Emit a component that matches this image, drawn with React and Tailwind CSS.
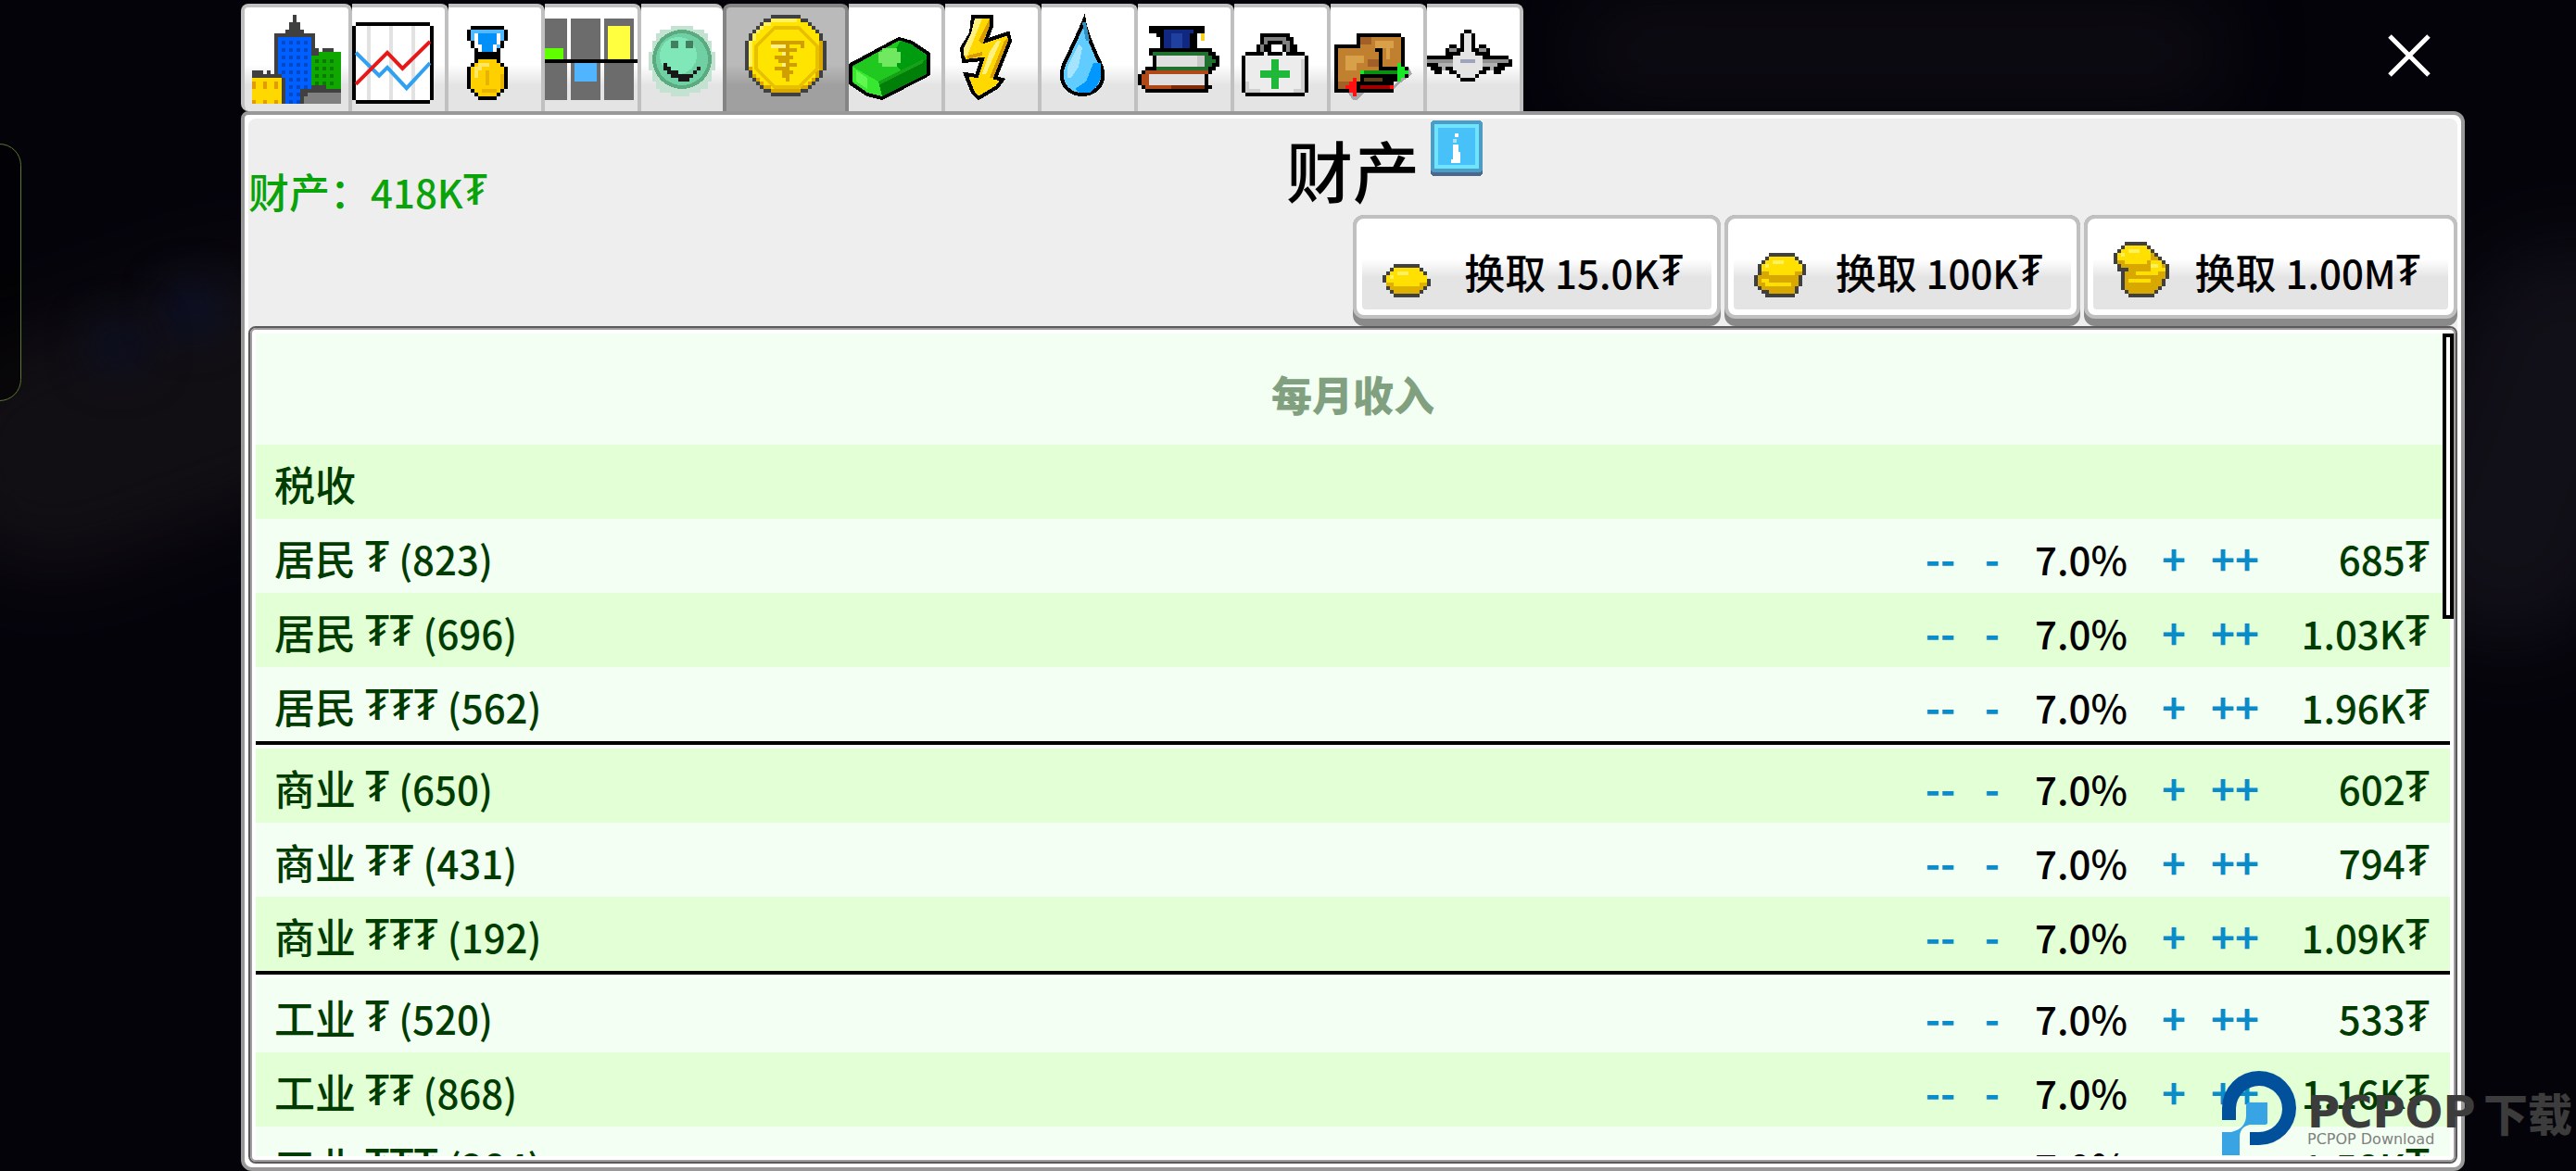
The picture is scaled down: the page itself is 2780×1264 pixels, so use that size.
import { useState } from "react";

// Tab icons are drawn on a grid where one unit is a 4px "pixel"
const CityIcon = () => (
  <>
    <path fill="#404040" d="M13 2h1v2h1v2h1v1h3v4h1v1h1v-1h3v1h1v1h1v13H2V17h3v1h1v-1h1v1h1V7h3V6h1V4h1z" />
    <path fill="#0060ff" d="M9 8h9v18H9z" />
    <path fill="#0048c8" d="M10 9h1v17h-1zM12 9h1v17h-1zM14 9h1v17h-1zM16 9h1v17h-1z" />
    <path fill="#0060ff" d="M9 10h9v1H9zM9 12h9v1H9zM9 14h9v1H9zM9 16h9v1H9zM9 18h9v1H9zM9 20h9v1H9zM9 22h9v1H9zM9 24h9v1H9zM13 8h1v18h-1z" />
    <path fill="#10a800" d="M18 13h2v-1h6v11h-8z" />
    <path fill="#087c00" d="M19 14h1v1h-1zM21 14h1v1h-1zM23 14h1v1h-1zM19 16h1v1h-1zM21 16h1v1h-1zM23 16h1v1h-1zM19 18h1v1h-1zM21 18h1v1h-1zM23 18h1v1h-1zM19 20h1v1h-1zM21 20h1v1h-1zM23 20h1v1h-1z" />
    <path fill="#404040" d="M15 22h3v-1h4v1h4v4H15zM9 19h2v7H9zM2 18h8v1H2z" />
    <path fill="#808080" d="M17 23h9v3H16v-2h1z" />
    <path fill="#ffd800" d="M2 19h8v7H2z" />
    <path fill="#e09c00" d="M2 20h1v2H2zM5 20h1v2H5zM8 20h1v2H8zM2 25h1v1H2zM5 25h1v1H5zM8 25h1v1H8z" />
  </>
);

const ChartIcon = () => (
  <>
    <path fill="#000" d="M1 4h20v1h1v20h-1v1H1v-1H0V5h1z" />
    <rect x="1" y="5" width="20" height="20" fill="#fff" />
    <path fill="#e2e2e2" d="M4 5h1v20H4zM10 5h1v20h-1zM16 5h1v20h-1z" />
    <g fill="none" strokeWidth="1" shapeRendering="auto">
      <path stroke="#30a0f0" d="M1 12.2l6.3 6.2 2.2-2.2 5.2 5.6L21 15" />
      <path stroke="#e81818" d="M1 20.7l8.5-8.5 4.1 4.3L21 9.2" />
    </g>
  </>
);

const MedalIcon = () => (
  <>
    <path fill="#000" d="M6 5h9v1h1v3h-1v2h-1v2h-1v1h1v1h1v1h1v6h-1v1h-1v1h-1v1H8v-1H7v-1H6v-1H5v-6h1v-1h1v-1h1v-1H7v-2H6V9H5V6h1z" />
    <path fill="#50b8ff" d="M6 6h9v3h-1v2h-1v2H8v-2H7V9H6z" />
    <path fill="#0090f8" d="M8 7h5v3h-1v3H9v-3H8z" />
    <path fill="#fff" d="M7 7h1v3h1v3H8v-2H7zM13 7h1v3h-1v3h-1v-3h1z" />
    <path fill="#000" d="M7 12h7v2H7z" />
    <path fill="#ffd000" d="M8 14h5v1h1v1h1v6h-1v1h-1v1H8v-1H7v-1H6v-6h1v-1h1z" />
    <path fill="#ffe860" d="M8 15h3v1H9v1H8v2H7v-3h1z" />
    <path fill="#e8b400" d="M10 17h1v4h-1zM12 22h1v1H9v-1zM14 18h1v4h-1z" />
  </>
);

const ZonesIcon = () => (
  <>
    <path fill="#6c6c6c" d="M0 3h6v22H0zM7 3h8v22H7zM16 3h8v22h-8z" />
    <path fill="#60ff00" d="M0 11h5v3H0z" />
    <path fill="#50b4ff" d="M8 15h6v5H8z" />
    <path fill="#ffff40" d="M17 5h6v9h-6z" />
    <path fill="#000" d="M0 14h25v1H0z" />
  </>
);

const SmileIcon = () => (
  <>
    <path fill="#c4e2d2" d="M8 5h6v1h3v1h1v2h1v3h1v5h-1v3h-1v2h-2v1h-3v1H8v-1H5v-1H4v-2H3v-3H2v-5h1V9h1V7h1V6h3z" />
    <circle cx="11" cy="14" r="8" fill="#5aac80" />
    <circle cx="11" cy="14" r="7" fill="#70d0a4" />
    <circle cx="10" cy="13" r="5" fill="#80e8b8" />
    <path fill="#408060" d="M8 9h2v2H8zM12 9h2v2h-2z" />
    <path fill="#181818" d="M6 15h1v1h1v1h2v1h4v-1h1v-1h1v1h-1v1h-1v1h-1v1h-3v-1H8v-1H7v-1H6z" />
  </>
);

const CoinIcon = () => (
  <>
    <path fill="#404040" d="M12 2h8v1h2v1h1v1h1v1h1v1h1v2h1v8h-1v2h-1v1h-1v1h-1v1h-1v1h-2v1h-8v-1h-2v-1H9v-1H8v-1H7v-1H6v-2H5V9h1V7h1V6h1V5h1V4h1V3h2z" />
    <path fill="#d8a800" d="M12 3h8v1h2v1h1v1h1v1h1v2h1v8h-1v2h-1v1h-1v1h-1v1h-2v1h-8v-1h-2v-1H9v-1H8v-1H7v-2H6V9h1V7h1V6h1V5h1V4h2z" />
    <path fill="#ffe400" d="M12 3h8v1h2v1h1v1h1v1h1v10h-1v2h-1v1h-1v1h-2v1h-8v-1h-2v-1H9v-1H8v-1H7v-2H6V9h1V7h1V6h1V5h1V4h2z" />
    <path fill="#fff060" d="M12 3h7v1h-7v1h-2v1H9v1H8v2H7v7H6V9h1V7h1V6h1V5h1V4h2z" />
    <path fill="none" stroke="#e8c000" d="M13 5.5h6.5l5 5v6l-5 5H13l-5-5v-6z" />
    <path fill="#d0a000" d="M12 9h9v2h-1v-1h-3v1h2v1h-2v1h1v1h-1v1h2v1h-2v1h1v1h-1v2h-1v-1h-1v-2h-2v-1h2v-1h-1v-1h-1v-1h2v-1h-1v-1h1v-1h-3z" />
    <path fill="#fff080" d="M12 10h4v1h-4zM15 12h1v1h-1zM15 15h1v1h-1z" />
  </>
);

const MoneyIcon = () => (
  <>
    <path fill="#10b018" stroke="#000" d="M13.500 8.500L17 9.500l4.500 3V18L9 24.500l-4-1-4.500-3v-5z" />
    <path fill="#20c820" d="M13.500 9L7 12.500l-6 3.500 7 4 6-3 3-7z" />
    <path fill="#009c10" d="M14 9l3 1 4 3v1l-7 3-3-3z" />
    <path fill="#008008" d="M21 14v4L9 24l-1-4z" />
    <path fill="#18a018" d="M20 14L8 20v1l12-6z" />
    <path fill="#38e830" d="M1 16l7 4 1 4-4-1-4-3z" />
    <path fill="#60f850" d="M2 17l3 2v3l-3-2z" />
    <path fill="#70e860" d="M9 11h4v1h1v3h-1v1H9v-1H8v-3h1z" />
  </>
);

const BoltIcon = () => (
  <>
    <path
      fill="#ffd800"
      stroke="#000"
      d="M7.500 2.500h5V5L11 9l6-2 .5 2-4 10 2 .5-1.500 2-5 3L7.500 23l-2-5 3 .5L10 14l-5 .5-.5-3.500L7 7z"
    />
    <path fill="#fff080" d="M8 3h2L8 8l-2 5H5v-2l2-4zM14 9h1l-4 9h-1l2-6z" />
    <path fill="#d89c00" d="M12 3v2l-2 5-1-1 2-4zM17 8v1l-4 10h-1l4-10zM6 13l4-1v1l-4 1z" />
  </>
);

const DropIcon = () => (
  <>
    <path fill="#60ccff" stroke="#000" d="M11.500 3.500Q12 7 16 15.500q1.500 4-1 6.500-1.500 1.500-4 1.500T7 22q-2.500-2.500-1-6.500Q10.500 6 11.500 3.500z" />
    <path fill="#3090c0" d="M11 4h1l1 5h-1z" />
    <path fill="#0098ff" d="M14 15h2v4l-1 2-2 2h-3l-1-1 3-2z" />
    <path fill="#a4e4ff" d="M10 10l1 1-1 5-2 3H7v-3z" />
  </>
);

const BooksIcon = () => (
  <>
    <path fill="#000" d="M3 5H18V7H16V11H20V12H21V13H22V16H21V17H20V18H19V21H20V22H19V23H2V22H1V21H0V18H1V17H2V16H4V13H3V11H6V8H5V7H3z" />
    <path fill="#102880" d="M7 6h8v1h-1v4H7z" />
    <path fill="#2040a0" d="M9 7h3v4H9z" />
    <path fill="#f8d020" d="M17 7h1v2h-1z" />
    <path fill="#207030" d="M4 12h15v1h1v1h1v1h-1v1h-1v1H5v-1h13v-3H4z" />
    <path fill="#e0e0e0" d="M5 13h13v3H5zM3 18h15v3H3z" />
    <path fill="#c8c8c8" d="M16 13h2v3h-2z" />
    <path fill="#b04818" d="M2 17h17v1H3v3h15v1H2v-1H1v-3h1z" />
    <path fill="#802c08" d="M9 21h9v1H9z" />
  </>
);

const MedkitIcon = () => (
  <>
    <path fill="#000" d="M7 7h8v1h1v2h1v2h2v1h1v10h-1v1H3v-1H2V13h1v-1h3v-2h1z" />
    <path fill="#808080" d="M8 8h6v1h1v3h-1v-2h-1V9H9v1H8v2H7v-2h1z" />
    <path fill="#fff" d="M10 10h3v2h-3z" />
    <path fill="#ececec" d="M3 13h5v-1h1v1h4v-1h1v1h5v10H3z" />
    <path fill="#d0d0d0" d="M3 20h1v2h3v1H3zM18 14h1v9h-3v-1h2z" />
    <path fill="#20b838" d="M10 14h2v3h3v2h-3v3h-2v-3H7v-2h3z" />
  </>
);

const TradeIcon = () => (
  <>
    <path fill="#a8a8a8" d="M4 22l2 3h1l2-2h7l2-2 4-3-1-2-3 4-2 2z" />
    <path fill="#000" d="M7 7h12v1h1v8h1v3h-2v1h-2v3H7v1H6v-1H1V10h6z" />
    <path fill="#c08030" d="M8 8h11v8h-5v-5H8zM2 11h10v1h1v5H8v3H5v2H2z" />
    <path fill="#d8a048" d="M12 9h5v2h-1v3h-1v-3h-3zM4 13h5v2H7v2H4z" />
    <path fill="#a06028" d="M8 8h3v2H8zM10 14h3v2h-3zM2 20h3v2H2z" />
    <path fill="#604018" d="M9 19h5v1H9z" />
    <path fill="#089010" d="M9 17h9v1H9z" />
    <path fill="#18e828" d="M8 17h1v1H8zM18 15h1v1h1v1h1v1h-1v1h-1v1h-1z" />
    <path fill="#a00000" d="M8 21h8v1H8z" />
    <path fill="#ff1010" d="M16 21h1v1h-1zM7 19v5H6v-1H5v-1H4v-1h1v-1h1v-1z" />
  </>
);

const PlaneIcon = () => (
  <>
    <path fill="#000" d="M10 6H12V7H13V11H14V10H16V11H17V13H22V14H23V16H21V17H20V18H18V17H16V18H14V19H13V20H9V19H8V18H6V17H4V18H2V17H1V16H-1V14H0V13H5V11H6V10H8V11H9V7H10z" />
    <path fill="#e4e4e4" d="M10 7h2v5h1v1h2v4h-1v1h-1v1H9v-1H8v-1H7v-4h2v-1h1z" />
    <path fill="#909090" d="M6 11h2v1H6zM14 11h2v1h-2zM0 14h7v1H0zM15 14h7v1h-7z" />
    <path fill="#b0b0b0" d="M3 15h4v1H5v1H4v-1H3zM15 15h4v1h-1v1h-1v-1h-2z" />
    <path fill="#a0a4b8" d="M9 14h4v1H9z" />
  </>
);

const TABS = [
  { id: "city", label: "城市", Icon: CityIcon, units: 28, edges: "border-x-4 rounded-l-lg" },
  { id: "stats", label: "统计", Icon: ChartIcon, units: 25 },
  { id: "medals", label: "成就", Icon: MedalIcon, units: 25 },
  { id: "zones", label: "需求", Icon: ZonesIcon, units: 25 },
  { id: "mood", label: "幸福度", Icon: SmileIcon, units: 22, edges: "border-x-0" },
  { id: "estate", label: "财产", Icon: CoinIcon, units: 32, edges: "border-x-4 rounded-tl-lg" },
  { id: "budget", label: "预算", Icon: MoneyIcon, units: 25 },
  { id: "power", label: "电力", Icon: BoltIcon, units: 25 },
  { id: "water", label: "水", Icon: DropIcon, units: 25 },
  { id: "education", label: "教育", Icon: BooksIcon, units: 25 },
  { id: "health", label: "医疗", Icon: MedkitIcon, units: 25 },
  { id: "trade", label: "贸易", Icon: TradeIcon, units: 25 },
  { id: "airport", label: "机场", Icon: PlaneIcon, units: 25 },
];

const OneCoin = () => (
  <>
    <path fill="#404040" d="M3 6h7v1h1v1h1v2h1v2h-1v1h-1v1h-1v1H3v-1H2v-1H1v-2H0V9h1V8h1V7h1z" />
    <path fill="#e0b000" d="M3 7h7v1h1v1h1v3h-1v1h-1v1H3v-1H2v-1H1V9h1V8h1z" />
    <path fill="#ffe000" d="M3 7h7v1h1v1h1v2h-2v1H3v-1H1V9h1V8h1z" />
    <path fill="#fff060" d="M4 8h3v1H3v1H2V9h2z" />
  </>
);

const CoinStack = () => (
  <>
    <path fill="#404040" d="M4 3h7v1h1v1h1v1h1v3h-1v3h-1v2h-1v1H3v-1H2v-1H1v-1H0V9h1V6h1V5h1V4h1z" />
    <path fill="#d8a800" d="M4 4h7v1h1v1h1v3h-1v3h-1v2H4v-1H2v-1H1V9h1V6h1V5h1z" />
    <path fill="#ffe000" d="M4 4h7v1h1v1h1v2h-2v1H4V8H2V6h1V5h1zM2 10h2v1h6v1H3v-1H2z" />
    <path fill="#fff060" d="M5 5h3v1H4v1H3V6h2z" />
  </>
);

const CoinPile = () => (
  <>
    <path fill="#404040" d="M3 0h6v1h1v1h1v1h1v1h1v1h1v1h1v4h-1v2h-1v1h-1v1h-1v1H4v-1H3v-1H2V8H1V6H0V3h1V2h1V1h1z" />
    <path fill="#d8a800" d="M3 1h6v1h1v1h1v1h1v1h1v1h1v4h-1v2h-1v1h-1v1H4v-1H3V8h1V7H2V6H1V3h1V2h1z" />
    <path fill="#ffe000" d="M3 1h6v1h1v3H9v1H3V5H1V3h1V2h1zM10 5h3v2h1v1h-2v1H6V8h4zM4 10h6v1H4z" />
    <path fill="#fff060" d="M4 2h3v1H3v1H2V3h2zM10 6h2v1h-2z" />
  </>
);

const OFFERS = [
  { amount: "15.0K", Icon: OneCoin },
  { amount: "100K", Icon: CoinStack },
  { amount: "1.00M", Icon: CoinPile },
];

const GROUPS = [
  [
    { name: "居民", level: 1, count: 823, amount: "685" },
    { name: "居民", level: 2, count: 696, amount: "1.03K" },
    { name: "居民", level: 3, count: 562, amount: "1.96K" },
  ],
  [
    { name: "商业", level: 1, count: 650, amount: "602" },
    { name: "商业", level: 2, count: 431, amount: "794" },
    { name: "商业", level: 3, count: 192, amount: "1.09K" },
  ],
  [
    { name: "工业", level: 1, count: 520, amount: "533" },
    { name: "工业", level: 2, count: 868, amount: "1.16K" },
    { name: "工业", level: 3, count: 284, amount: "1.58K" },
  ],
];

// Currency sign, raised a little above the baseline
const Sign = ({ level = 1 }) => (
  <span className="align-[4px] font-['Noto_Sans','Noto_Sans_CJK_SC',sans-serif] text-[46px] leading-none">
    {"₮".repeat(level)}
  </span>
);

// Figures run slightly smaller than the Chinese text
const Num = ({ children }) => <span className="text-[42px]">{children}</span>;

const RateButton = ({ children, onClick, label }) => (
  <button
    type="button"
    aria-label={label}
    onClick={onClick}
    className="w-full cursor-pointer text-center font-bold text-[#0a8ccb]"
  >
    {children}
  </button>
);

const TaxRow = ({ row, striped }) => {
  const [rate, setRate] = useState(7);
  const change = (step) => setRate((r) => Math.max(0, r + step));

  return (
    <tr className={`h-20 *:pt-1 ${striped ? "bg-[#e2ffd6]" : "bg-[#f2fff2]"}`}>
      <th scope="row" className="pl-5 text-left font-medium">
        {row.name} <Sign level={row.level} /> <Num>({row.count})</Num>
      </th>
      <td>
        <RateButton label="大幅降低" onClick={() => change(-1)}>--</RateButton>
      </td>
      <td>
        <RateButton label="降低" onClick={() => change(-0.1)}>-</RateButton>
      </td>
      <td className="text-center text-black">
        <Num>{rate.toFixed(1)}%</Num>
      </td>
      <td>
        <RateButton label="提高" onClick={() => change(0.1)}>+</RateButton>
      </td>
      <td>
        <RateButton label="大幅提高" onClick={() => change(1)}>++</RateButton>
      </td>
      <td className="pr-[22px] text-right whitespace-nowrap">
        <Num>{row.amount}</Num>
        <Sign />
      </td>
    </tr>
  );
};

const IncomeTable = () => (
  <table className="w-full table-fixed border-collapse font-medium text-[#003c00]">
    <caption className="h-[120px] bg-[#f2fff2] pt-8 font-black text-[#80a080]">
      每月收入
    </caption>
    <colgroup>
      <col />
      <col className="w-16" />
      <col className="w-12" />
      <col className="w-36" />
      <col className="w-14" />
      <col className="w-[76px]" />
      <col className="w-[194px]" />
    </colgroup>
    {GROUPS.map((rows, g) => (
      <tbody key={rows[0].name}>
        {g === 0 ? (
          <tr className="h-20 bg-[#e2ffd6]">
            <th scope="colgroup" colSpan={7} className="pt-1 pl-5 text-left font-medium">
              税收
            </th>
          </tr>
        ) : (
          <tr aria-hidden="true">
            <td colSpan={7} className="p-0">
              <div className="h-2 border-t-4 border-black bg-[#fbfffb]" />
            </td>
          </tr>
        )}
        {rows.map((row, i) => (
          <TaxRow key={row.level} row={row} striped={(g * 3 + i) % 2 === 1} />
        ))}
      </tbody>
    ))}
  </table>
);

const TabBar = ({ active, onSelect }) => (
  <nav className="flex h-[116px]">
    {TABS.map(({ id, label, Icon, units, edges = "border-r-4" }) => (
      <button
        key={id}
        type="button"
        aria-label={label}
        aria-pressed={active === id}
        onClick={() => onSelect(id)}
        className={`shrink-0 cursor-pointer rounded-tr-lg border-t-4 ${edges} ${
          active === id
            ? "border-[#848484] bg-linear-to-b from-[#bababa] from-55% to-[#a0a0a0] to-75%"
            : "border-[#c0c0c0] bg-linear-to-b from-white from-55% to-[#e4e4e4] to-75%"
        }`}
      >
        <svg
          width={units * 4}
          height="112"
          viewBox={`0 0 ${units} 28`}
          shapeRendering="crispEdges"
          aria-hidden="true"
        >
          <Icon />
        </svg>
      </button>
    ))}
  </nav>
);

const OfferButton = ({ amount, Icon }) => (
  <button
    type="button"
    className="flex h-[120px] cursor-pointer rounded-xl bg-[#8a8a8a] pb-2"
  >
    <span className="flex h-full items-center rounded-xl border-4 border-[#c0c0c0] bg-white p-1.5 pt-0">
      <span className="flex h-full items-center rounded-sm bg-linear-to-b from-white from-45% to-[#e4e4e4] to-65% pr-[30px] pl-[18px]">
        <svg
          width="64"
          height="60"
          viewBox="-1 0 16 15"
          shapeRendering="crispEdges"
          aria-hidden="true"
          className="mt-3 mr-7"
        >
          <Icon />
        </svg>
        <span className="pt-3 leading-none font-medium whitespace-nowrap">
          换取 <Num>{amount}</Num>
          <Sign />
        </span>
      </span>
    </span>
  </button>
);

const InfoButton = () => (
  <button type="button" aria-label="信息" className="mt-0.5 ml-3 cursor-pointer self-start justify-self-start">
    <svg width="56" height="60" viewBox="0 0 14 15" shapeRendering="crispEdges" aria-hidden="true">
      <rect width="14" height="15" rx="1" fill="#48688c" />
      <rect width="14" height="14" rx="1" fill="#4c9cc4" />
      <path fill="#70e4ff" d="M1 1h12v12H1z" />
      <path fill="#48c0f8" d="M2 2h10v10H2z" />
      <path fill="#fff" d="M6.500 3.500h1v1h-1zM6 6.500h1.500v2H8v3H5.500v-1H6z" />
      <path fill="#a8e4ff" d="M6 5h1v1H6z" />
    </svg>
  </button>
);

const Watermark = () => (
  <div className="pointer-events-none absolute right-1 bottom-4 flex items-start gap-3">
    <svg width="80" height="92" viewBox="0 0 80 92" aria-hidden="true">
      <path fill="#00509c" d="M0 53V40a40 40 0 1 1 40 40H30V66h10a25 25 0 1 0-25-26v13z" />
      <path fill="#38a4e4" d="M30 34h19v22q0 2-4 2H30q-11 2-11 14v19H0V66h10q16-4 16-18V38q0-4 4-4z" />
    </svg>
    <div className="pt-5 text-[#3c3c3c]">
      <div className="flex items-center text-5xl leading-none font-bold">
        <span className="w-[190px] font-['DejaVu_Sans',sans-serif]">PCPOP</span>
        <span className="font-black">下载</span>
      </div>
      <div className="-mt-1 font-['DejaVu_Sans',sans-serif] text-base leading-5 text-[#808080]">
        PCPOP Download
      </div>
    </div>
  </div>
);

// Blurred night map behind the window
const Backdrop = () => (
  <div className="absolute inset-0 overflow-hidden" aria-hidden="true">
    <div className="absolute top-[320px] -left-20 h-[260px] w-[480px] -rotate-20 rounded-full bg-[#120f14] blur-2xl" />
    <div className="absolute top-[310px] left-[180px] h-12 w-14 rounded-full bg-[#0a1230] blur-xl" />
    <div className="absolute top-[350px] left-[100px] h-12 w-14 rounded-full bg-[#0a1028] blur-xl" />
    <div className="absolute top-[260px] -right-20 h-[440px] w-[240px] rotate-20 rounded-full bg-[#110f17] blur-2xl" />
    <div className="absolute top-0 left-[1700px] h-[110px] w-[700px] rounded-full bg-[#0e0c13] blur-2xl" />
    <div className="absolute top-[155px] -left-6 h-[278px] w-[47px] rounded-3xl border border-[#567a2e] bg-black/50" />
  </div>
);

export default function App() {
  const [tab, setTab] = useState("estate");

  return (
    <main className="relative h-screen overflow-hidden bg-[#04030a] font-['Noto_Sans_CJK_SC',sans-serif] text-[44px]">
      <Backdrop />

      <div className="relative flex h-full flex-col pr-[120px] pl-[260px]">
        <div className="flex h-[120px] items-center justify-between pt-1 pr-9">
          <TabBar active={tab} onSelect={setTab} />
          <button type="button" aria-label="关闭" className="cursor-pointer pb-1">
            <svg width="48" height="48" viewBox="0 0 48 48" fill="none" stroke="#fff" strokeWidth="5" aria-hidden="true">
              <path d="M3 3l42 42M45 3L3 45" />
            </svg>
          </button>
        </div>

        <section className="flex min-h-0 flex-1 flex-col rounded-xl rounded-tl-lg border-4 border-[#999] bg-white p-1">
          <div className="flex min-h-0 flex-1 flex-col rounded-lg bg-[#eee]">
            <header>
              <div className="grid h-[104px] grid-cols-[1fr_auto_1fr] items-center">
                <p className="self-end pb-1 leading-none font-medium text-[#0aa30a]">
                  财产：<Num>418K</Num>
                  <Sign />
                </p>
                <h1 className="pt-1 text-7xl leading-none font-medium">财产</h1>
                <InfoButton />
              </div>
              <div className="flex justify-end gap-1">
                {OFFERS.map((offer) => (
                  <OfferButton key={offer.amount} {...offer} />
                ))}
              </div>
            </header>

            <div className="flex min-h-0 flex-1 rounded-lg border-2 border-[#5a5a5a]">
              <div className="relative min-w-0 flex-1 rounded-md border-2 border-[#a09ca0] bg-white p-1">
                <div className="h-full overflow-hidden bg-[#f2fff2]">
                  <IncomeTable />
                </div>
                <div className="absolute top-1 right-0 h-[308px] w-3 border-4 border-black bg-white" />
              </div>
            </div>
          </div>
        </section>
      </div>

      <Watermark />
    </main>
  );
}
